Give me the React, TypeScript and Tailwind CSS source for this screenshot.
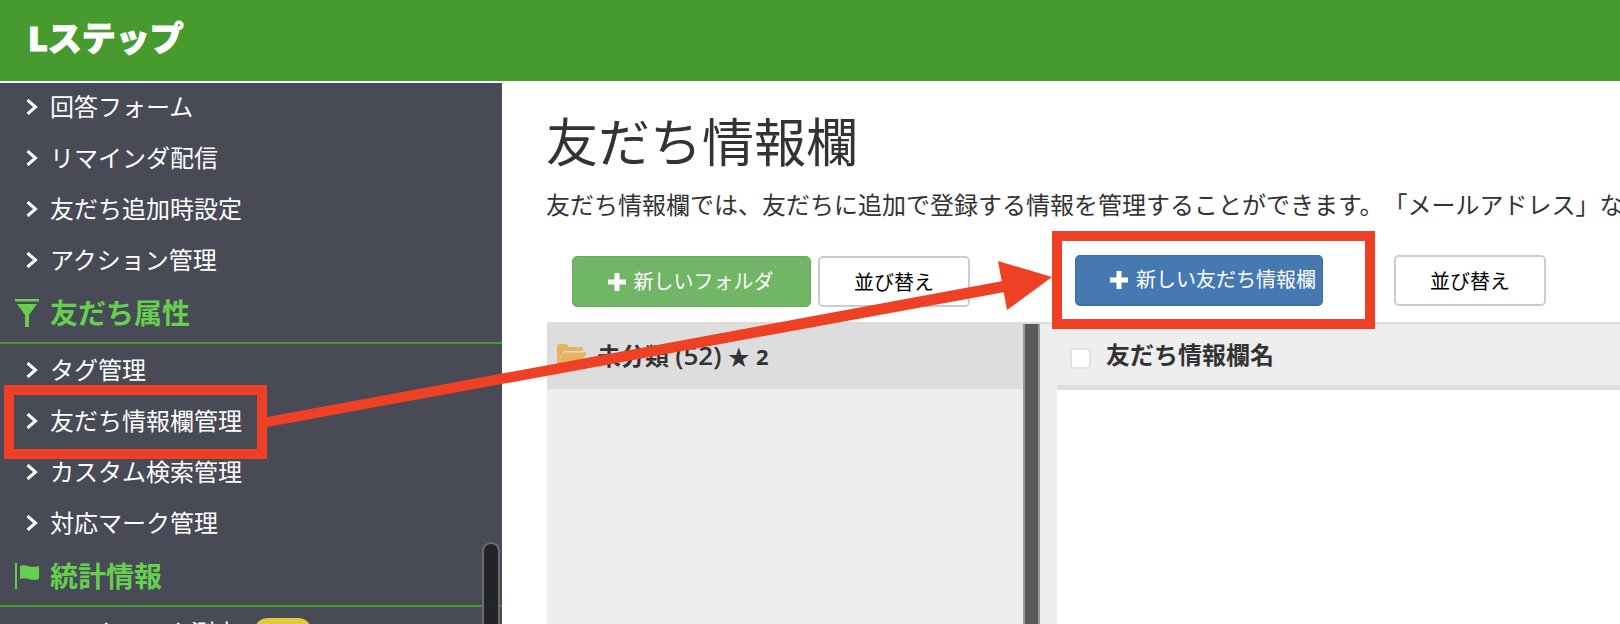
const FONT = '"Open Sans", "Noto Sans CJK JP", sans-serif';

function Chevron() {
  return (
    <svg width="12" height="16" viewBox="0 0 12 16" className="mr-[12px] shrink-0">
      <polyline points="1.500,1 9.500,8 1.500,15" fill="none" stroke="#fff" strokeWidth="3" />
    </svg>
  );
}

function MenuItem({ label, badge }: { label: string; badge?: boolean }) {
  return (
    <div className="flex h-[51px] items-center pl-[26px] text-[24px] leading-none text-white">
      <Chevron />
      <span className="whitespace-nowrap">{label}</span>
      {badge && <span className="ml-[15px] h-[30px] w-[58px] rounded-[14px] bg-[#e0c93a]" />}
    </div>
  );
}

function Section({ label, icon }: { label: string; icon: React.ReactNode }) {
  return (
    <div className="flex h-[59px] items-center gap-[11px] border-b-2 border-[#479a2e] pb-[2px] pl-[15px] text-[28px] font-bold leading-none text-[#66cf50]">
      {icon}
      <span>{label}</span>
    </div>
  );
}

function Plus() {
  return (
    <svg width="18" height="18" viewBox="0 0 18 18" className="shrink-0">
      <path d="M6.500 0h5v6.500H18v5h-6.500V18h-5v-6.500H0v-5h6.500z" fill="#fff" />
    </svg>
  );
}

function SortButton() {
  return (
    <button className="h-[51px] w-[152px] rounded-[5px] border-2 border-[#ccc] bg-white pt-[2px] text-[20px] text-black">
      並び替え
    </button>
  );
}

export default function App() {
  return (
    <div className="relative h-[624px] w-[1620px] overflow-hidden bg-white" style={{ fontFamily: FONT }}>
      {/* header */}
      <div className="flex h-[81px] items-center bg-[#479a2e] pb-[5px] pl-[28px]">
        <span className="text-[34px] font-black leading-none text-white [-webkit-text-stroke:1px_white]">
          Lステップ
        </span>
      </div>

      <div className="mt-[2px] flex h-[541px]">
        {/* sidebar */}
        <div className="w-[502px] shrink-0 overflow-hidden bg-[#484a56]">
          <div className="mt-[-2px]">
            <MenuItem label="回答フォーム" />
            <MenuItem label="リマインダ配信" />
            <MenuItem label="友だち追加時設定" />
            <MenuItem label="アクション管理" />
            <Section
              label="友だち属性"
              icon={
                <svg width="24" height="28" viewBox="0 0 24 28">
                  <path d="M0 0h24v2.500H0zM2 5h20l-8 11v12h-4V16z" fill="#66cf50" />
                </svg>
              }
            />
            <MenuItem label="タグ管理" />
            <MenuItem label="友だち情報欄管理" />
            <MenuItem label="カスタム検索管理" />
            <MenuItem label="対応マーク管理" />
            <Section
              label="統計情報"
              icon={
                <svg width="24" height="26" viewBox="0 0 24 26">
                  <path d="M0 0h2v26H0z" fill="#66cf50" />
                  <path d="M5 3c6-3 9 3 19 0v13c-8 3-13-3-19 0z" fill="#66cf50" />
                </svg>
              }
            />
            <MenuItem label="URLクリック測定" badge />
          </div>
        </div>

        {/* main */}
        <div className="min-w-0 flex-1 pl-[45px]">
          <h1 className="ml-[-1px] mt-[27px] whitespace-nowrap text-[52px] font-normal leading-[64px] text-[#333]">友だち情報欄</h1>
          <p className="ml-[-1px] mt-[15px] whitespace-nowrap text-[24px] leading-[32px] text-[#333] [text-spacing-trim:space-all]">
            友だち情報欄では、友だちに追加で登録する情報を管理することができます。「メールアドレス」な
          </p>
          <div className="mt-[35px] flex h-[51px]">
            <div className="flex w-[528px] gap-[7px] pl-[25px]">
              <button className="flex h-[51px] w-[239px] items-center justify-center gap-[8px] rounded-[5px] border border-[#68ab5d] bg-[#71b566] pr-[2px] text-[20px] text-white">
                <Plus />
                新しいフォルダ
              </button>
              <SortButton />
            </div>
            <div className="mt-[-1px] flex gap-[71px]">
              <button className="flex h-[51px] w-[248px] items-center justify-center gap-[8px] rounded-[5px] border border-b-2 border-[#3f6ea3] bg-[#4679b2] pl-[28px] text-[20px] text-white">
                <Plus />
                新しい友だち情報欄
              </button>
              <SortButton />
            </div>
          </div>

          {/* panels */}
          <div className="mt-[15px] flex h-[400px] border-t-2 border-[#ddd]">
            <div className="w-[476px] shrink-0 bg-[#eee]">
              <div className="flex h-[65px] items-center bg-[#ddd] pb-[3px] pl-[10px] text-[24px] font-bold text-[#333]">
                <svg width="30" height="20" viewBox="0 0 30 20" className="mb-[2px] mr-[10px] shrink-0">
                  <path d="M0 20V2.500C0 1 1 0 2.500 0h7l2.500 3h12c1 0 2 1 2 2v2H7z" fill="#e8b25e" />
                  <path d="M0 20 7 8.500h23L23 20z" fill="#e8b25e" />
                </svg>
                <span className="whitespace-nowrap">
                  未分類 <span className="text-[26px] font-semibold">(52)</span> <span className="text-[22px]">★</span>{" "}
                  <span className="text-[22px]">2</span>
                </span>
              </div>
            </div>
            <div className="w-[17px] shrink-0 border-x-2 border-[#999] bg-[#5a5a5a]" />
            <div className="min-w-0 flex-1 bg-[#eee] pl-[17px]">
              <div className="flex h-[66px] items-center border-b-[5px] border-[#ddd] bg-[#eee] pl-[13px] text-[24px] font-bold text-[#333]">
                <span className="mr-[15px] mt-[7px] h-[21px] w-[21px] shrink-0 rounded-[4px] border-2 border-[#e2e2e2] bg-white" />
                友だち情報欄名
              </div>
              <div className="h-full bg-white" />
            </div>
          </div>
        </div>
      </div>

      {/* sidebar scrollbar */}
      <div className="absolute left-[482px] top-[542px] h-[100px] w-[18px] rounded-[9px] border-2 border-[#6a6b73] bg-[#212226]/95" />

      {/* red annotations */}
      <div className="absolute left-[4px] top-[385px] h-[74px] w-[263px] border-[10px] border-[#ee4024]" />
      <div className="absolute left-[1052px] top-[231px] h-[98px] w-[323px] border-[10px] border-[#ee4024]" />
      <svg width="1620" height="624" className="pointer-events-none absolute left-0 top-0">
        <path d="M267 417 1003 281l2 11L267 427z" fill="#ee4024" />
        <polygon points="998,261 1052,277 1007,310" fill="#ee4024" />
      </svg>
    </div>
  );
}
